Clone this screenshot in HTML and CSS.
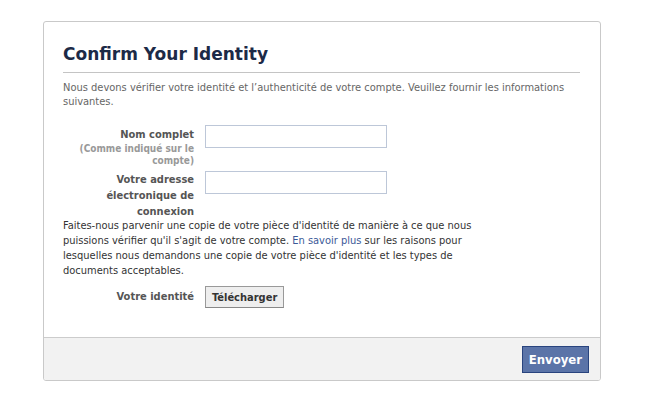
FILE: index.html
```html
<!DOCTYPE html>
<html>
<head>
<meta charset="utf-8">
<link rel="stylesheet" href="styles.css">
</head>
<body>
<div class="card">
  <div class="content">
    <h2 class="title">Confirm Your Identity</h2>
    <p class="intro">Nous devons vérifier votre identité et l’authenticité de votre compte. Veuillez fournir les informations suivantes.</p>
    <div class="row">
      <div class="label">Nom complet<span class="sub">(Comme indiqué sur le compte)</span></div>
      <div class="field"><input class="input" type="text"></div>
    </div>
    <div class="row">
      <div class="label">Votre adresse électronique de connexion</div>
      <div class="field"><input class="input" type="text"></div>
    </div>
    <p class="info">Faites-nous parvenir une copie de votre pièce d'identité de manière à ce que nous puissions vérifier qu'il s'agit de votre compte. <a href="#" class="link">En savoir plus</a> sur les raisons pour lesquelles nous demandons une copie de votre pièce d'identité et les types de documents acceptables.</p>
    <div class="row row-upload">
      <div class="label">Votre identité</div>
      <div class="field"><button class="btn-upload" type="button">Télécharger</button></div>
    </div>
  </div>
  <div class="footer">
    <button class="btn-send" type="button">Envoyer</button>
  </div>
</div>
</body>
</html>
```
FILE: styles.css
```css
body {
  margin: 0;
  background: #fff;
  font-family: "DejaVu Sans Condensed", "DejaVu Sans", sans-serif;
  font-size: 11px;
  color: #333;
}
.card {
  margin: 21px 0 0 43px;
  width: 556px;
  border: 1px solid #c9c9c9;
  border-radius: 3px;
  overflow: hidden;
}
.content {
  padding: 20px 20px 29px 19px;
}
.title {
  margin: 0;
  padding: 2px 0 8px;
  font-family: "DejaVu Sans", sans-serif;
  font-size: 17px;
  font-weight: bold;
  color: #1c2a47;
  border-bottom: 1px solid #c4c4c4;
}
.intro {
  margin: 8px 0 0;
  color: #666;
  line-height: 14px;
}
.row {
  display: flex;
  align-items: flex-start;
  margin-top: 16px;
}
.row + .row {
  margin-top: 4px;
}
.label {
  width: 131px;
  text-align: right;
  font-weight: bold;
  color: #555;
  line-height: 16px;
  padding-top: 2px;
}
.row + .row .label {
  padding-top: 1px;
}
.sub {
  display: block;
  font-size: 10px;
  color: #999;
  line-height: 12px;
  padding-left: 14px;
}
.field {
  margin-left: 11px;
}
.input {
  display: block;
  box-sizing: border-box;
  width: 182px;
  height: 23px;
  margin: 0;
  border: 1px solid #bdc7d8;
  padding: 3px;
}
.info {
  margin: -2px 0 0;
  width: 420px;
  line-height: 15px;
  color: #333;
}
.link {
  color: #3b5998;
  text-decoration: none;
}
.row.row-upload {
  margin-top: 8px;
  align-items: center;
}
.row.row-upload .label {
  padding-top: 0;
}
.btn-upload {
  font-family: inherit;
  font-size: 11px;
  font-weight: bold;
  color: #333;
  background: #eee;
  border: 1px solid #999;
  border-bottom-color: #888;
  height: 22px;
  padding: 0 6px;
  margin: 0;
}
.footer {
  background: #f2f2f2;
  border-top: 1px solid #ccc;
  padding: 8px 11px 7px;
  display: flex;
  justify-content: flex-end;
}
.btn-send {
  font-family: inherit;
  font-size: 13px;
  font-weight: bold;
  color: #fff;
  background: #5b74a8;
  border: 1px solid #29447e;
  height: 27px;
  padding: 0 6px;
  margin: 0;
}
```
